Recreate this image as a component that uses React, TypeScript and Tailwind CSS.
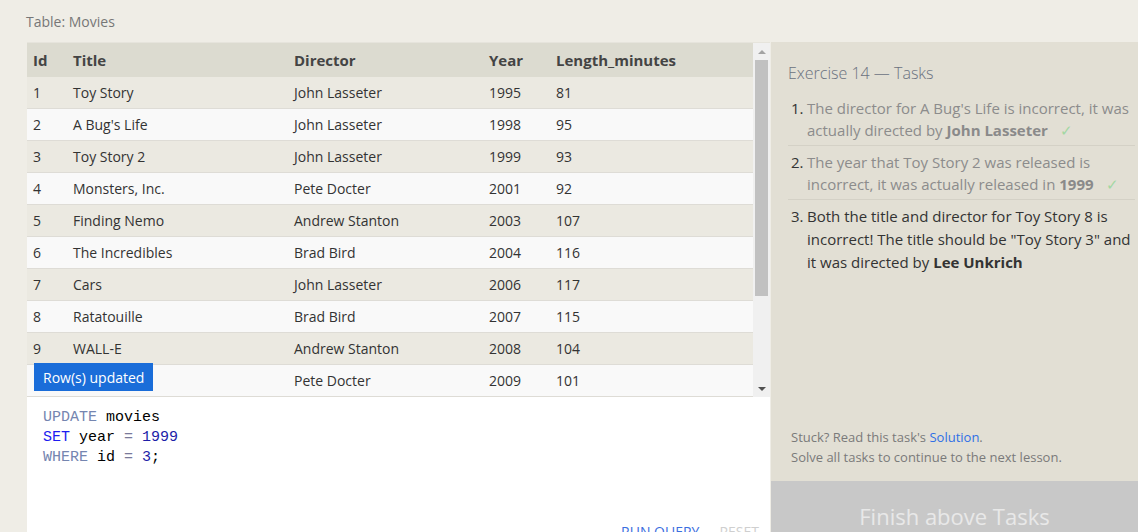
const MOVIES = [
  [1, "Toy Story", "John Lasseter", 1995, 81],
  [2, "A Bug's Life", "John Lasseter", 1998, 95],
  [3, "Toy Story 2", "John Lasseter", 1999, 93],
  [4, "Monsters, Inc.", "Pete Docter", 2001, 92],
  [5, "Finding Nemo", "Andrew Stanton", 2003, 107],
  [6, "The Incredibles", "Brad Bird", 2004, 116],
  [7, "Cars", "John Lasseter", 2006, 117],
  [8, "Ratatouille", "Brad Bird", 2007, 115],
  [9, "WALL-E", "Andrew Stanton", 2008, 104],
  [10, "Up", "Pete Docter", 2009, 101],
];

const COLS = "grid grid-cols-[40px_221px_195px_67px_203px]";

function Check() {
  return <span className="ml-3 text-[#a3d8a3] font-normal">✓</span>;
}

function MoviesTable() {
  return (
    <div className="relative flex h-[355px] border-t border-[#e6e4dc]">
      <div className="flex-1 overflow-hidden">
        <div className={`${COLS} h-[34px] items-center bg-[#dcdbd0] font-bold text-[#444] text-[15px]`}>
          <div className="pl-1.5">Id</div>
          <div className="pl-1.5">Title</div>
          <div className="pl-1.5">Director</div>
          <div className="pl-1.5">Year</div>
          <div className="pl-1.5">Length_minutes</div>
        </div>
        {MOVIES.map((m, i) => (
          <div
            key={i}
            className={`${COLS} h-[32px] items-center border-b border-[#dedcd6] text-[14px] text-[#333] ${
              i % 2 === 0 ? "bg-[#ebe9e1]" : "bg-[#f9f9f9]"
            }`}
          >
            {m.map((v, j) => (
              <div key={j} className="pl-1.5">
                {v}
              </div>
            ))}
          </div>
        ))}
      </div>
      {/* scrollbar */}
      <div className="w-[17px] bg-[#f0f0f0] flex flex-col items-center">
        <div className="h-[17px] flex items-center justify-center">
          <div className="w-0 h-0 border-x-[4px] border-x-transparent border-b-[4px] border-b-[#a3a3a3]" />
        </div>
        <div className="w-[13px] h-[236px] bg-[#c1c1c1]" />
        <div className="flex-1" />
        <div className="h-[17px] flex items-center justify-center">
          <div className="w-0 h-0 border-x-[4px] border-x-transparent border-t-[4px] border-t-[#505050]" />
        </div>
      </div>
      <div className="absolute left-[7px] top-[320px] h-[28px] px-[9px] flex items-center bg-[#1a6dd9] text-white text-[14px]">
        Row(s) updated
      </div>
    </div>
  );
}

function Editor() {
  return (
    <div className="flex-1 bg-white relative">
      <pre className="pt-[11px] pl-4 text-[15px] leading-[20px] font-['Liberation_Mono',monospace] text-black">
        <span className="text-[#7585b0]">UPDATE</span> movies{"\n"}
        <span className="text-[#1c1cf0]">SET</span> year <span className="text-[#7a7a9a]">=</span>{" "}
        <span className="text-[#1e1ea8]">1999</span>
        {"\n"}
        <span className="text-[#7585b0]">WHERE</span> id <span className="text-[#7a7a9a]">=</span>{" "}
        <span className="text-[#1e1ea8]">3</span>;
      </pre>
      <div className="absolute right-[11px] top-[124px] flex gap-5 text-[14px]">
        <span className="text-[#3b6ee0]">RUN QUERY</span>
        <span className="text-[#cfcfcf]">RESET</span>
      </div>
    </div>
  );
}

function Tasks() {
  return (
    <div className="w-[367px] ml-px flex flex-col bg-[#e2dfd4]">
      <div className="flex-1 pl-[17px] pr-[3px] pt-[20px]">
        <h2 className="text-[16px] font-light text-[#6b7280] leading-[22px]">Exercise 14 — Tasks</h2>
        <ol className="mt-[13px] text-[15px] leading-[22px]">
          <li className="flex pb-[4px] border-b border-[#d4d1c6]">
            <span className="w-[19px] pl-[3px] text-[#333]">1.</span>
            <span className="flex-1 text-[#8c8c8c]">
              The director for A Bug's Life is incorrect, it was actually directed by{" "}
              <b className="text-[#8a8a8a]">John Lasseter</b>
              <Check />
            </span>
          </li>
          <li className="flex pt-[5px] pb-[4px] border-b border-[#d4d1c6]">
            <span className="w-[19px] pl-[3px] text-[#333]">2.</span>
            <span className="flex-1 text-[#8c8c8c]">
              The year that Toy Story 2 was released is incorrect, it was actually released in{" "}
              <b className="text-[#8a8a8a]">1999</b>
              <Check />
            </span>
          </li>
          <li className="flex pt-[5px] leading-[23px]">
            <span className="w-[19px] pl-[3px] text-[#333]">3.</span>
            <span className="flex-1 text-[#333]">
              Both the title and director for Toy Story 8 is incorrect! The title should be "Toy Story 3" and
              it was directed by <b>Lee Unkrich</b>
            </span>
          </li>
        </ol>
      </div>
      <div className="pl-[20px] pb-[14px] text-[13px] leading-[20px] text-[#7a7a7a]">
        <p>
          Stuck? Read this task's <span className="text-[#2f6fe6]">Solution</span>.
        </p>
        <p>Solve all tasks to continue to the next lesson.</p>
      </div>
      <div className="h-[51px] shrink-0 bg-[#c8c8c8] flex justify-center pt-[20px] text-[22px] leading-[30px] text-[#e8e8e8]">
        Finish above Tasks
      </div>
    </div>
  );
}

export default function App() {
  return (
    <div className="w-[1138px] h-[532px] overflow-hidden bg-[#efede6] font-['Open_Sans',sans-serif]">
      <div className="h-[42px] pl-[26px] pt-[11px] text-[14px] leading-[22px] text-[#777]">Table: Movies</div>
      <div className="flex h-[490px] pl-[27px]">
        <div className="w-[743px] flex flex-col">
          <MoviesTable />
          <Editor />
        </div>
        <Tasks />
      </div>
    </div>
  );
}
